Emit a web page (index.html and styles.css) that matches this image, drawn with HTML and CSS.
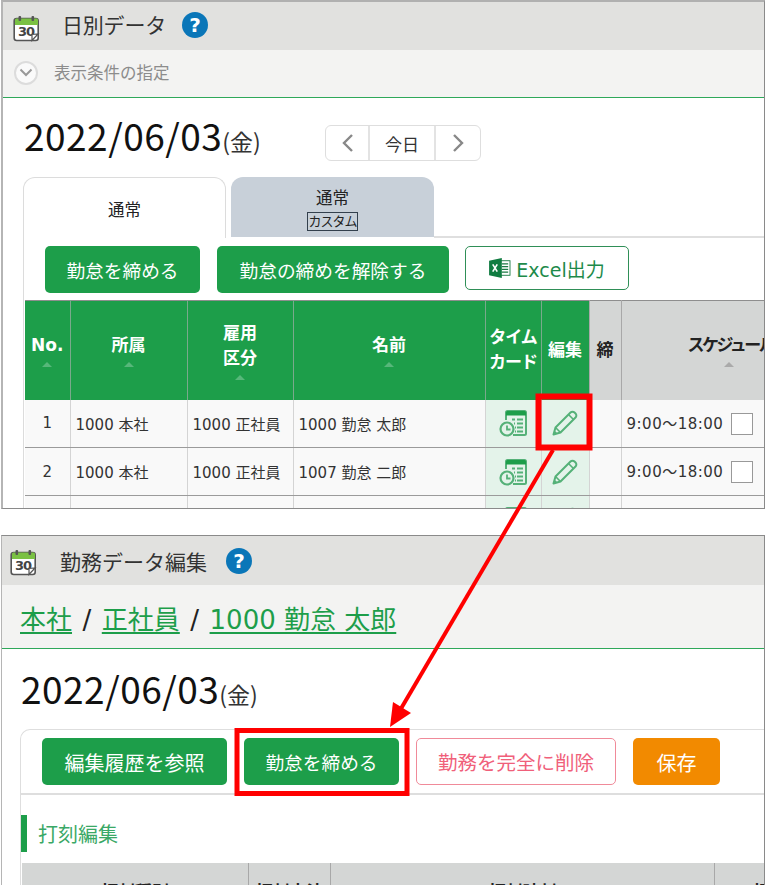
FILE: index.html
```html
<!DOCTYPE html>
<html lang="ja">
<head>
<meta charset="utf-8">
<title>勤怠マニュアル</title>
<link rel="stylesheet" href="styles.css">
</head>
<body>
<svg class="defs" width="0" height="0">
  <defs>
    <symbol id="cal" viewBox="0 0 27 27">
      <rect x="1.2" y="3.5" width="24" height="22" rx="2.5" fill="#fff" stroke="#555" stroke-width="1.6"/>
      <path d="M2 10V5a1.5 1.5 0 0 1 1.5-1.5h20A1.5 1.5 0 0 1 25 5v5z" fill="#7ac143"/>
      <rect x="5.5" y="1" width="2.6" height="5" rx="1" fill="#555"/>
      <rect x="18.5" y="1" width="2.6" height="5" rx="1" fill="#555"/>
      <text x="5" y="21" class="cal-num">30</text>
      <path d="M25 19l-6 6.5v-6z" fill="#fff" stroke="#555" stroke-width="1.2"/>
    </symbol>
    <symbol id="help" viewBox="0 0 26 26">
      <circle cx="13" cy="13" r="13" fill="#0a76b8"/>
      <text x="13" y="20" class="help-q">?</text>
    </symbol>
    <symbol id="card" viewBox="0 0 28 28">
      <path d="M7 11V3.500a1.500 1.500 0 0 1 1.500-1.500h17a1.500 1.500 0 0 1 1.500 1.500v21a1.500 1.500 0 0 1-1.500 1.500H14" fill="none" stroke="#55b178" stroke-width="2"/>
      <path d="M7 6.500V3.500A1.500 1.500 0 0 1 8.500 2h17A1.500 1.500 0 0 1 27 3.500v3z" fill="#1d9e4a"/>
      <path d="M13 10.500h3M18 10.500h6M15 14.500h1M18 14.500h6M17 18.500h-1M18 18.500h6M17 22.500h-1M18 22.500h6" stroke="#55b178" stroke-width="2" fill="none"/>
      <circle cx="8" cy="20" r="6.500" fill="#e4f3ea" stroke="#55b178" stroke-width="2.200"/>
      <path d="M8 16.500V20.500h3.500" stroke="#55b178" stroke-width="1.800" fill="none"/>
    </symbol>
    <symbol id="pen" viewBox="0 0 26 26">
      <path d="M1.500 24.500l2-7L18.500 2.500a2.800 2.800 0 0 1 4 0l1 1a2.800 2.800 0 0 1 0 4L8.500 22.500z" fill="none" stroke="#55b178" stroke-width="2" stroke-linejoin="round"/>
      <path d="M3.500 17.500l5 5M16.500 4.500l5 5" fill="none" stroke="#55b178" stroke-width="1.600"/>
      <path d="M1.500 24.500l1-4 3 3z" fill="#55b178"/>
    </symbol>
  </defs>
</svg>

<section class="win win-top">
  <header class="title-bar">
    <svg class="cal"><use href="#cal"/></svg>
    <h1 class="title">日別データ</h1>
    <svg class="help"><use href="#help"/></svg>
  </header>
  <div class="cond-bar">
    <span class="chev-circle"><svg width="14" height="9" viewBox="0 0 14 9"><path d="M1.500 1.500L7 7l5.500-5.500" fill="none" stroke="#999" stroke-width="2"/></svg></span>
    <span class="cond-text">表示条件の指定</span>
  </div>
  <div class="date-row">
    <div class="date date-1">2022/06/03<small>(金)</small></div>
    <div class="pager">
      <span class="pg pg-arrow pg-first"><svg width="13" height="20" viewBox="0 0 13 20"><path d="M11 2L3 10l8 8" fill="none" stroke="#888" stroke-width="2.400"/></svg></span>
      <span class="pg pg-mid">今日</span>
      <span class="pg pg-arrow"><svg width="13" height="20" viewBox="0 0 13 20"><path d="M2 2l8 8-8 8" fill="none" stroke="#888" stroke-width="2.400"/></svg></span>
    </div>
  </div>
  <div class="tab-row">
    <div class="tab tab-on">通常</div>
    <div class="tab tab-off">通常<span class="custom">カスタム</span></div>
    <div class="tab-rest"></div>
  </div>
  <div class="panel">
    <div class="actions">
      <button class="btn green b1">勤怠を締める</button>
      <button class="btn green b2">勤怠の締めを解除する</button>
      <button class="btn excel">
        <svg width="22" height="20" viewBox="0 0 24 22"><rect x="11" y="3" width="12" height="16" fill="#fff" stroke="#1a7a43"/><path d="M14 6.500h7M14 9.500h7M14 12.500h7M14 15.500h7" stroke="#1a7a43" stroke-width="1.500"/><path d="M0 3l14-3v22L0 19z" fill="#107c41"/><path d="M4 7l5 8M9 7l-5 8" stroke="#fff" stroke-width="1.800"/></svg>
        Excel出力
      </button>
    </div>
    <table class="grid">
      <colgroup><col class="c1"><col class="c2"><col class="c3"><col class="c4"><col class="c5"><col class="c6"><col class="c7"><col class="c8"></colgroup>
      <thead>
        <tr>
          <th>No.<i class="sort"></i></th>
          <th>所属<i class="sort"></i></th>
          <th>雇用<br>区分<i class="sort"></i></th>
          <th>名前<i class="sort"></i></th>
          <th class="tc">タイム<br>カード</th>
          <th>編集</th>
          <th class="gray">締</th>
          <th class="gray sched">スケジュール<i class="sort dark"></i></th>
        </tr>
      </thead>
      <tbody>
        <tr>
          <td class="ctr">1</td><td>1000 本社</td><td>1000 正社員</td><td>1000 勤怠 太郎</td>
          <td class="tint"><svg class="ic-card"><use href="#card"/></svg></td>
          <td class="tint"><svg class="ic-pen"><use href="#pen"/></svg></td>
          <td></td><td class="time">9:00～18:00<span class="chk"></span></td>
        </tr>
        <tr>
          <td class="ctr">2</td><td>1000 本社</td><td>1000 正社員</td><td>1007 勤怠 二郎</td>
          <td class="tint"><svg class="ic-card"><use href="#card"/></svg></td>
          <td class="tint"><svg class="ic-pen"><use href="#pen"/></svg></td>
          <td></td><td class="time">9:00～18:00<span class="chk"></span></td>
        </tr>
        <tr>
          <td></td><td></td><td></td><td></td>
          <td class="tint"><svg class="ic-card"><use href="#card"/></svg></td>
          <td class="tint"><svg class="ic-pen"><use href="#pen"/></svg></td>
          <td></td><td></td>
        </tr>
      </tbody>
    </table>
  </div>
</section>

<section class="win win-bottom">
  <header class="title-bar title-bar-2">
    <svg class="cal"><use href="#cal"/></svg>
    <h1 class="title">勤務データ編集</h1>
    <svg class="help"><use href="#help"/></svg>
  </header>
  <div class="crumb-bar">
    <a class="crumb">本社</a><span class="sep">/</span><a class="crumb">正社員</a><span class="sep">/</span><a class="crumb">1000 勤怠 太郎</a>
  </div>
  <div class="date date-2">2022/06/03<small>(金)</small></div>
  <div class="card">
    <div class="actions-2">
      <button class="btn green e1">編集履歴を参照</button>
      <button class="btn green e2">勤怠を締める</button>
      <button class="btn danger e3">勤務を完全に削除</button>
      <button class="btn orange e4">保存</button>
    </div>
    <h2 class="section">打刻編集</h2>
    <div class="edit-head">
      <span class="eh eh1">打刻種別</span><span class="eh eh2">打刻方法</span><span class="eh eh3">打刻時刻</span><span class="eh eh4">打刻</span>
    </div>
  </div>
</section>

<svg class="marks" width="765" height="885" viewBox="0 0 765 885">
  <rect x="538.500" y="396.500" width="51" height="51" fill="none" stroke="#ff0000" stroke-width="6"/>
  <rect x="237" y="730.500" width="170" height="63" fill="none" stroke="#ff0000" stroke-width="5"/>
  <path d="M553 450L399 712" stroke="#ff0000" stroke-width="4" fill="none"/>
  <path d="M390 727l3-25 18 11z" fill="#ff0000"/>
</svg>
</body>
</html>
```
FILE: styles.css
```css
* { box-sizing: border-box; }
html, body { margin: 0; padding: 0; }
body {
  width: 765px;
  height: 885px;
  position: relative;
  overflow: hidden;
  background: #fff;
  color: #222;
  font-family: "DejaVu Sans", "Noto Sans CJK JP", sans-serif;
}
.defs { position: absolute; }
.cal-num { font: 700 13px "DejaVu Sans", sans-serif; fill: #444; letter-spacing: -1px; }
.help-q { font: 700 20px "DejaVu Sans", sans-serif; fill: #fff; text-anchor: middle; }

.win {
  margin-left: 1px;
  border: 1px solid #8a8a8a;
  border-left: 2px solid #b5b5b5;
  background: #fff;
  overflow: hidden;
}
.win-top { height: 509px; border-top: 2px solid #b0b0b0; }
.win-bottom { height: 350px; margin-top: 26px; border-bottom: 0; border-left-width: 1px; margin-left: 1px; }

.title-bar {
  display: flex;
  align-items: center;
  height: 48px;
  background: #e1e1df;
  padding-left: 10px;
}
.cal { width: 27px; height: 27px; margin-top: 4px; }
.title { margin: 0 0 0 22px; font-size: 21px; font-weight: 400; line-height: 1; color: #333; letter-spacing: -.2px; }
.help { width: 26px; height: 26px; margin-left: 16px; margin-top: -3px; }
.title-bar-2 { height: 49px; padding-left: 8px; }
.title-bar-2 .title { margin: 5px 0 0 23px; letter-spacing: 0; }
.title-bar-2 .help { margin: 1px 0 0 19px; }

.cond-bar {
  display: flex;
  align-items: center;
  height: 48px;
  background: #f3f3f2;
  border-bottom: 1px solid #2ea85a;
  padding: 0 0 2px 11px;
}
.chev-circle {
  display: flex;
  align-items: center;
  justify-content: center;
  width: 24px;
  height: 24px;
  border: 2px solid #dcdcdc;
  border-radius: 50%;
  background: #fafafa;
}
.cond-text { margin: 4px 0 0 16px; font-size: 16.5px; color: #8c8c8c; line-height: 1; }

.date-row { display: flex; align-items: flex-start; height: 79px; padding: 19px 0 0 21px; }
.date { font-family: "Noto Sans CJK JP", sans-serif; font-size: 37px; line-height: 1; color: #111; letter-spacing: .5px; }
.date small { font-size: 23px; letter-spacing: 0; color: #333; }
.date-1 { width: 301px; }
.pager {
  display: flex;
  height: 36px;
  margin-top: 8px;
  border: 1px solid #dedede;
  border-radius: 6px;
}
.pg { display: flex; align-items: center; justify-content: center; font-size: 17px; color: #333; }
.pg-arrow { width: 44px; }
.pg-first { width: 42px; }
.pg-mid { width: 68px; border-left: 2px solid #e3e3e3; border-right: 2px solid #e3e3e3; }

.tab-row { display: flex; height: 61px; margin-left: 20px; }
.tab {
  width: 203px;
  display: flex;
  flex-direction: column;
  align-items: center;
  justify-content: center;
  font-size: 16.5px;
  line-height: 1.3;
  border-radius: 12px 12px 0 0;
}
.tab-on { border: 1px solid #dcdcdc; border-bottom: 0; background: #fff; color: #222; padding-top: 5px; }
.tab-off { margin-left: 5px; background: #c8d0d9; color: #222; height: 60px; padding-top: 5px; }
.custom {
  font-size: 13px;
  line-height: 17px;
  height: 19px;
  width: 51px;
  text-align: center;
  white-space: nowrap;
  border: 1px solid #33404d;
  margin-top: 3px;
  letter-spacing: -1px;
}
.tab-rest { flex: 1; border-bottom: 2px solid #dfdfdf; }

.panel { margin-left: 20px; border-left: 1px solid #dcdcdc; margin-top: -1px; }
.actions { display: flex; align-items: flex-start; height: 63px; padding: 9px 0 0 21px; }
.btn {
  font-family: inherit;
  font-size: 18.7px;
  line-height: 1;
  border-radius: 5px;
  border: 0;
  padding: 5px 0 0;
  height: 47px;
  display: flex;
  align-items: center;
  justify-content: center;
}
.green { background: #1d9e4a; color: #fff; }
.b1 { width: 155px; }
.b2 { width: 232px; margin-left: 17px; }
.excel {
  width: 164px;
  margin-left: 16px;
  height: 44px;
  gap: 5px;
  font-size: 19px;
  background: #fff;
  border: 1px solid #2f8f57;
  color: #1d8a4a;
  padding-top: 4px;
}
.excel svg { margin-top: -4px; }

.grid { width: 741px; table-layout: fixed; border-collapse: collapse; border-top: 1px solid #8e8e8e; margin-left: 1px; font-size: 15px; }
.c1 { width: 45px; } .c2 { width: 117px; } .c3 { width: 106px; } .c4 { width: 192px; }
.c5 { width: 56px; } .c6 { width: 48px; } .c7 { width: 32px; } .c8 { width: 145px; }
.grid th {
  height: 99px;
  background: #1d9e4a;
  color: #fff;
  font-size: 17px;
  line-height: 25px;
  font-weight: 700;
  text-align: center;
  vertical-align: middle;
  border-left: 1px solid #7aa98c;
  padding: 0;
}
.grid th:first-child { border-left: 0; }
.grid th.tc { letter-spacing: -1px; }
.grid th.gray { background: #d4d6d5; color: #222; border-left: 1px solid #a8a8a8; }
.grid th.sched { text-align: left; padding-left: 66px; white-space: nowrap; overflow: hidden; letter-spacing: -2.5px; }
.sort {
  display: block;
  width: 0;
  height: 0;
  margin: 4px auto 0;
  border-left: 5px solid transparent;
  border-right: 5px solid transparent;
  border-bottom: 5px solid #57b77a;
}
.sort.dark { border-bottom-color: #aaa; margin: 4px 0 0 36px; }
.grid td {
  height: 48px;
  background: #f9f9f9;
  border-left: 1px solid #d4d4d4;
  border-bottom: 1px solid #9b9b9b;
  padding: 0 0 0 5px;
  white-space: nowrap;
  color: #333;
}
.grid td:first-child { border-left: 0; }
.grid td.ctr { text-align: center; padding: 0; }
.grid td.tint { background: #e4f3ea; text-align: center; padding: 0; }
.ic-card { display: block; width: 28px; height: 28px; margin: 0 auto; }
.ic-pen { display: block; width: 26px; height: 26px; margin: 0 auto; }
.grid td.time { letter-spacing: .5px; }
.chk {
  display: inline-block;
  vertical-align: middle;
  width: 22px;
  height: 22px;
  margin-left: 8px;
  background: #fff;
  border: 1px solid #999;
}

.crumb-bar {
  height: 64px;
  background: #f3f3f2;
  border-bottom: 1px solid #2ea85a;
  display: flex;
  align-items: center;
  padding: 6px 0 0 18px;
  font-size: 26px;
  line-height: 1;
}
.crumb { color: #1d9e4a; text-decoration: underline; text-underline-offset: 3px; white-space: pre; }
.sep { margin: 0 10.5px; color: #222; }
.date-2 { margin: 21px 0 0 19px; height: 59px; }
.card {
  margin-left: 18px;
  border-radius: 10px 0 0 0;
  border: 1px solid #dedede;
  border-width: 1px 0 0 1px;
  height: 160px;
  overflow: hidden;
}
.actions-2 {
  display: flex;
  align-items: center;
  gap: 17px;
  height: 65px;
  padding-left: 21px;
  border-bottom: 2px solid #dedede;
}
.e1 { width: 185px; font-size: 20px; }
.e2 { width: 155px; }
.e3 { width: 200px; font-size: 19.5px; background: #fff; border: 1px solid #f08a99; color: #f0607a; }
.e4 { width: 87px; font-size: 20px; background: #f28a00; color: #fff; }
.section {
  margin: 20px 0 0;
  height: 37px;
  display: flex;
  align-items: center;
  padding-left: 11px;
  border-left: 6px solid #1d9e4a;
  font-size: 20px;
  font-weight: 400;
  color: #3aa866;
}
.edit-head {
  display: flex;
  height: 40px;
  margin: 11px 0 0 1px;
  background: #d4d6d5;
  font-size: 17px;
  font-weight: 700;
  color: #222;
}
.eh { flex: none; padding-top: 15px; text-align: center; border-right: 1px solid #a8a8a8; white-space: nowrap; }
.eh1 { width: 227px; }
.eh2 { width: 82px; }
.eh3 { width: 384px; }
.eh4 { width: 60px; border-right: 0; padding-left: 38px; text-align: left; overflow: hidden; }

.marks { position: absolute; left: 0; top: 0; pointer-events: none; }
```
